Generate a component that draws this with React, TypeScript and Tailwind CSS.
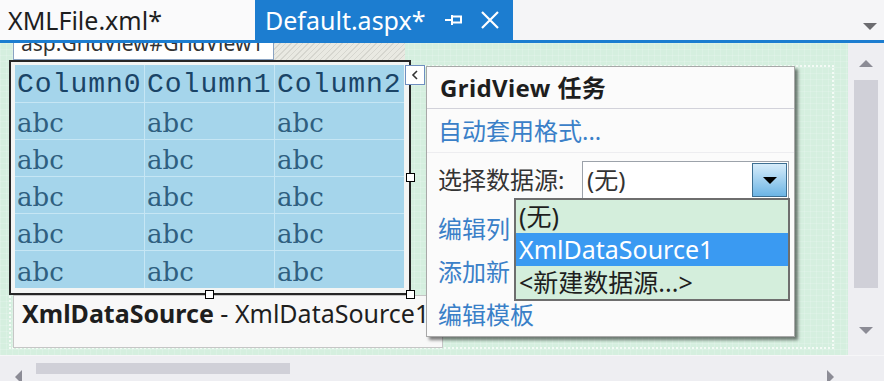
import React from "react";

const rows = ["abc", "abc", "abc", "abc", "abc"];

function Triangle({ dir, className }: { dir: "up" | "down" | "left" | "right"; className?: string }) {
  const pts =
    dir === "up"
      ? "0,7 7,0 14,7"
      : dir === "down"
      ? "0,0 14,0 7,7"
      : dir === "left"
      ? "7,0 7,14 0,7"
      : "0,0 0,14 7,7";
  const w = dir === "up" || dir === "down" ? 14 : 7;
  const h = dir === "up" || dir === "down" ? 7 : 14;
  return (
    <svg width={w} height={h} viewBox={`0 0 ${w} ${h}`} className={className}>
      <polygon points={pts} fill="currentColor" />
    </svg>
  );
}

export default function App() {
  return (
    <div className="w-[884px] h-[381px] overflow-hidden bg-[#f5f5f7] font-['Noto_Sans','Noto_Sans_CJK_SC',sans-serif] flex flex-col">
      {/* document tabs */}
      <div className="h-[40px] flex shrink-0">
        <div className="w-[255px] bg-[#fafafb] flex items-center pl-[8px] text-[25px] leading-none text-[#1e1e1e]">
          XMLFile.xml*
        </div>
        <div className="w-[258px] bg-[#1c7dd0] flex items-center pl-[10px] text-[25px] leading-none text-white">
          <span>Default.aspx*</span>
          <svg width="18" height="12" viewBox="0 0 18 12" className="ml-[20px]">
            <path d="M0 6h7M7 1v10" stroke="white" strokeWidth="2" fill="none" />
            <rect x="7" y="2.5" width="9" height="6" stroke="white" strokeWidth="2" fill="none" />
          </svg>
          <svg width="20" height="20" viewBox="0 0 20 20" className="ml-[17px]">
            <path d="M2 2L18 18M18 2L2 18" stroke="white" strokeWidth="2.2" />
          </svg>
        </div>
        <div className="flex-1 flex items-end justify-end pr-[7px] pb-[10px]">
          <Triangle dir="down" className="text-[#6c6c70]" />
        </div>
      </div>
      <div className="h-[3px] bg-[#1c7dd0] shrink-0" />

      <div className="flex h-[312px] shrink-0">
        {/* design surface */}
        <div className="w-[848px] relative overflow-hidden bg-[#d5efdf] bg-[image:linear-gradient(rgba(255,255,255,0.14)_1px,transparent_1px),linear-gradient(90deg,rgba(255,255,255,0.14)_1px,transparent_1px)] bg-[size:6px_6px]">
          <div className="absolute left-[9px] top-[22px] w-[825px] h-[284px] border-2 border-dotted border-[#f4fbf6]" />

          <div className="relative flex flex-col">
            {/* tag label */}
            <div className="flex items-end -mt-[5px] ml-[13px]">
              <div className="w-[261px] h-[22px] border border-[#8aa3c2] bg-white text-[21px] leading-none text-[#333] pl-[7px] flex items-end pb-[5px] overflow-hidden">
                asp:GridView#GridView1
              </div>
              <div className="w-[131px] h-[17px] bg-[repeating-linear-gradient(135deg,#d6d6cf_0px,#d6d6cf_1px,#e9e9e2_1px,#e9e9e2_4px)]" />
            </div>

            {/* grid view */}
            <div className="ml-[9px] w-[402px] h-[235px] border-2 border-[#262626] bg-[#f3f5f4] pt-[3px] pl-[4px] relative">
              <div className="w-[389px] bg-[#a5d5eb] grid grid-cols-[130px_130px_129px]">
                {["Column0", "Column1", "Column2"].map((c, i) => (
                  <div
                    key={c}
                    className={`h-[38px] flex items-center pl-[2px] pt-[2px] font-['Liberation_Mono',monospace] text-[28px] tracking-[1px] leading-none text-[#1a4467] border-b border-[#c6e6f4] ${i < 2 ? "border-r" : ""}`}
                  >
                    {c}
                  </div>
                ))}
                {rows.map((r, ri) =>
                  [0, 1, 2].map((ci) => (
                    <div
                      key={`${ri}-${ci}`}
                      className={`h-[37px] flex items-center pl-[2px] pt-[4px] font-['DejaVu_Serif',serif] text-[26px] leading-none text-[#2f5f80] border-[#c6e6f4] ${ri < 4 ? "border-b" : ""} ${ci < 2 ? "border-r" : ""}`}
                    >
                      {r}
                    </div>
                  ))
                )}
              </div>
              <div className="absolute left-[395px] top-[111px] w-[9px] h-[9px] bg-white border border-black" />
              <div className="absolute left-[194px] top-[228px] w-[9px] h-[9px] bg-white border border-black" />
              <div className="absolute left-[395px] top-[228px] w-[9px] h-[9px] bg-white border border-black" />
            </div>

            {/* data source control */}
            <div className="ml-[13px] w-[430px] h-[53px] border border-[#c6c6c6] bg-[#f8f8f8] pl-[8px] pt-[5px] text-[25px] leading-none text-[#1e1e1e] whitespace-nowrap overflow-hidden">
              <span className="font-bold">XmlDataSource</span> - XmlDataSource1
            </div>
          </div>

          {/* smart tag glyph */}
          <div className="absolute left-[405px] top-[22px] w-[20px] h-[20px] border border-[#6f8fc0] bg-white flex items-center justify-center">
            <svg width="8" height="10" viewBox="0 0 8 10">
              <path d="M6 1L2 5L6 9" stroke="#333" strokeWidth="1.6" fill="none" />
            </svg>
          </div>

          {/* tasks panel */}
          <div className="absolute left-[426px] top-[23px] w-[369px] h-[271px] bg-[#fbfbfb] border border-[#a8a8a8] shadow-[3px_3px_3px_rgba(0,0,0,0.5)] flex flex-col text-[24px] leading-none">
            <div className="h-[42px] shrink-0 border-b border-[#d2d2da] pl-[13px] flex items-center font-bold text-[24px] tracking-[0.4px] text-[#1e1e1e]">
              GridView 任务
            </div>
            <div className="h-[44px] shrink-0 border-b border-[#ededf0] pl-[11px] flex items-center text-[#3a80c8]">
              自动套用格式...
            </div>
            <div className="h-[54px] shrink-0 pl-[11px] pr-[5px] flex items-center text-[#333]">
              <span>选择数据源:</span>
              <div className="ml-auto w-[207px] h-[38px] border border-[#9ca2aa] bg-white flex items-center pl-[4px] pr-[1px]">
                <span>(无)</span>
                <div className="ml-auto w-[35px] h-[34px] border border-[#3d6f92] bg-[linear-gradient(180deg,#d6ecfa,#6db5e5)] flex items-center justify-center">
                  <Triangle dir="down" className="text-black" />
                </div>
              </div>
            </div>
            <div className="h-[43px] shrink-0 pl-[11px] flex items-center text-[#3a80c8]">
              <span className="w-[72px] overflow-hidden whitespace-nowrap">编辑列...</span>
            </div>
            <div className="h-[43px] shrink-0 pl-[11px] flex items-center text-[#3a80c8]">
              <span className="w-[72px] overflow-hidden whitespace-nowrap">添加新列...</span>
            </div>
            <div className="h-[44px] shrink-0 pl-[11px] flex items-center text-[#3a80c8]">编辑模板</div>
          </div>

          {/* open drop-down list */}
          <div className="absolute left-[514px] top-[155px] w-[276px] h-[103px] border-2 border-[#6e6e6e] bg-[#d4eedc] flex flex-col text-[25px] leading-none text-[#1e1e1e]">
            <div className="h-[33px] flex items-center pl-[3px]">(无)</div>
            <div className="h-[33px] flex items-center pl-[3px] bg-[#3a9af2] text-white">XmlDataSource1</div>
            <div className="h-[33px] flex items-center pl-[3px]">&lt;新建数据源...&gt;</div>
          </div>
        </div>

        {/* vertical scrollbar */}
        <div className="w-[36px] bg-[#eeeef2] flex flex-col items-center">
          <div className="h-[37px] flex items-center justify-center pt-[3px]">
            <Triangle dir="up" className="text-[#8c8c96]" />
          </div>
          <div className="w-[24px] h-[208px] bg-[#d0d0d8]" />
          <div className="flex-1 flex items-center justify-center pt-[18px]">
            <Triangle dir="down" className="text-[#8c8c96]" />
          </div>
        </div>
      </div>

      {/* horizontal scrollbar */}
      <div className="h-[26px] bg-[#eeeef2] flex items-start pt-[7px] border-t border-[#f6f6f8]">
        <div className="w-[36px] flex justify-center pt-[7px]">
          <Triangle dir="left" className="text-[#8c8c96]" />
        </div>
        <div className="w-[254px] h-[11px] bg-[#d0d0d8]" />
        <div className="ml-auto mr-[50px] pt-[7px]">
          <Triangle dir="right" className="text-[#8c8c96]" />
        </div>
      </div>
    </div>
  );
}
